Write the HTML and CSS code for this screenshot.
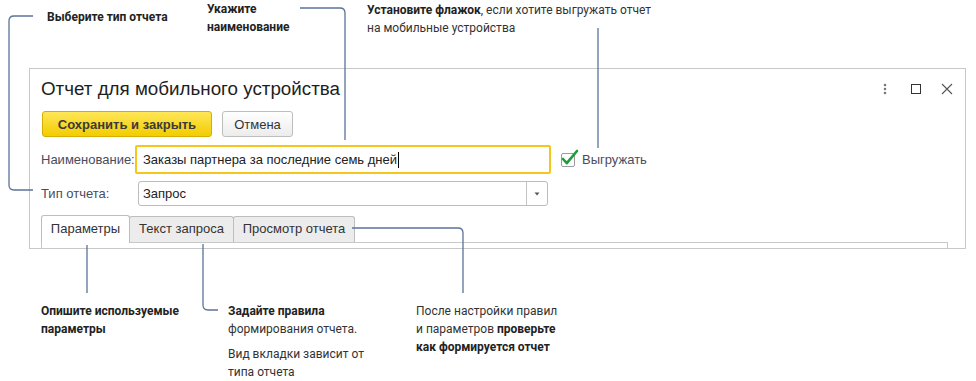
FILE: index.html
```html
<!DOCTYPE html>
<html lang="ru">
  <head>
    <meta charset="UTF-8" />
    <meta name="viewport" content="width=device-width, initial-scale=1.0" />
    <title>Отчет для мобильного устройства</title>
    <link rel="stylesheet" href="styles.css">
  </head>
  <body>
    <div class="page">
      <div class="notes notes-top">
        <p class="note note-type"><b>Выберите тип отчета</b></p>
        <p class="note note-name"><b>Укажите<br />наименование</b></p>
        <p class="note note-flag"><b>Установите флажок</b>, если хотите выгружать отчет<br />на мобильные устройства</p>
      </div>

      <div class="window">
        <div class="win-head">
          <h1 class="win-title">Отчет для мобильного устройства</h1>
          <div class="win-icons">
            <svg class="win-icon" viewBox="0 0 20 20">
              <circle cx="10" cy="6" r="1.3" fill="#7a7a7a" />
              <circle cx="10" cy="10" r="1.3" fill="#7a7a7a" />
              <circle cx="10" cy="14" r="1.3" fill="#7a7a7a" />
            </svg>
            <svg class="win-icon" viewBox="0 0 20 20">
              <rect x="5.5" y="5.5" width="9" height="9" fill="none" stroke="#333" stroke-width="1" />
            </svg>
            <svg class="win-icon" viewBox="0 0 20 20">
              <path d="M5 5 L15 15 M15 5 L5 15" stroke="#555" stroke-width="1.1" fill="none" />
            </svg>
          </div>
        </div>

        <div class="toolbar">
          <button class="btn btn-default">Сохранить и закрыть</button>
          <button class="btn btn-cancel">Отмена</button>
        </div>

        <div class="form-row row-name">
          <span class="field-label">Наименование:</span>
          <div class="field field-focus">Заказы партнера за последние семь дней<span class="caret"></span></div>
          <label class="check">
            <span class="check-box">
              <svg class="check-mark" viewBox="0 0 20 20">
                <path d="M3 11 L6.8 15.2 L17 3" stroke="#1f9c3b" stroke-width="2.6" fill="none" stroke-linecap="round" stroke-linejoin="round" />
              </svg>
            </span>
            Выгружать
          </label>
        </div>

        <div class="form-row row-type">
          <span class="field-label">Тип отчета:</span>
          <div class="field field-select">
            <span class="select-value">Запрос</span>
            <span class="select-btn">
              <svg viewBox="0 0 20 23" width="20" height="23">
                <path d="M7.5 10.5 L12.5 10.5 L10 13.5 Z" fill="#555" />
              </svg>
            </span>
          </div>
        </div>

        <div class="tabs">
          <div class="tab tab-active">Параметры</div>
          <div class="tab tab-query">Текст запроса</div>
          <div class="tab tab-preview">Просмотр отчета</div>
        </div>
        <div class="tab-panel"></div>
      </div>

      <div class="notes notes-bottom">
        <p class="note note-params"><b>Опишите используемые<br />параметры</b></p>
        <div class="note note-rules">
          <p><b>Задайте правила</b><br />формирования отчета.</p>
          <p class="note-extra">Вид вкладки зависит от<br />типа отчета</p>
        </div>
        <p class="note note-check">После настройки правил<br />и параметров <b>проверьте<br />как формируется отчет</b></p>
      </div>

      <!-- линии выносок -->
      <svg class="callouts" viewBox="0 0 976 381" width="976" height="381">
        <path d="M33 16 H14 Q9 16 9 21 V185 Q9 190 14 190 H33" />
        <path d="M300 8 H340 Q345 8 345 13 V140" />
        <path d="M598 28 V148" />
        <path d="M87 245 V293" />
        <path d="M203 244 V305 Q203 310 208 310 H218" />
        <path d="M352 228 H458 Q463 228 463 233 V293" />
      </svg>
    </div>
  </body>
</html>
```

FILE: styles.css
```css
* {
  margin: 0;
  padding: 0;
  box-sizing: border-box;
}
body {
  background: #fff;
  font-family: "Liberation Sans", Arial, sans-serif;
  color: #333;
}
.page {
  position: relative;
  width: 976px;
  height: 381px;
  overflow: hidden;
}

/* подписи */
.notes {
  display: flex;
  align-items: flex-start;
  font-family: Roboto, "Noto Sans", sans-serif;
  font-size: 12px;
  line-height: 18px;
  color: #333;
}
.note b {
  font-weight: 700;
  color: #222;
}
.notes-top {
  height: 68px;
}
.note-type {
  margin-left: 47px;
  width: 160px;
  padding-top: 8px;
}
.note-name {
  width: 160px;
}
.note-flag {
  padding-top: 1px;
}
.notes-bottom {
  margin-top: 53px;
}
.note-params {
  margin-left: 41px;
  width: 187px;
}
.note-rules {
  width: 188px;
}
.note-extra {
  margin-top: 7px;
}

/* окно */
.window {
  margin-left: 29px;
  width: 937px;
  height: 181px;
  border: 1px solid #c8c8c8;
  padding: 9px 8px 0 11px;
  overflow: hidden;
}
.win-head {
  display: flex;
  align-items: center;
  height: 22px;
}
.win-title {
  flex: 1;
  font-size: 18.8px;
  font-weight: normal;
  line-height: 22px;
  color: #1e1e1e;
}
.win-icons {
  display: flex;
  gap: 11px;
}
.win-icon {
  width: 20px;
  height: 20px;
}

.toolbar {
  display: flex;
  gap: 10px;
  margin-top: 11px;
}
.btn {
  height: 26px;
  border: 1px solid #bdbdbd;
  border-radius: 3px;
  background: linear-gradient(#ffffff, #ececec);
  font-family: "Liberation Sans", Arial, sans-serif;
  font-size: 13px;
  color: #333;
}
.btn-default {
  width: 170px;
  margin-left: 1px;
  background: linear-gradient(#ffe658, #f3cc00);
  border-color: #d4af00;
  font-weight: bold;
  color: #3a3a3a;
}
.btn-cancel {
  width: 71px;
}

.form-row {
  display: grid;
  align-items: center;
  font-size: 13px;
}
.row-name {
  grid-template-columns: 94px 416px auto;
  height: 29px;
  margin-top: 8px;
}
.row-type {
  grid-template-columns: 97px 410px;
  height: 25px;
  margin-top: 7px;
}
.field-label {
  color: #4b4b5c;
}
.field {
  display: flex;
  align-items: center;
  height: 25px;
  border: 1px solid #bcbcbc;
  border-radius: 3px;
  background: #fff;
  color: #222;
}
.field-focus {
  height: 29px;
  border: 2px solid #f5c61c;
  border-radius: 2px;
  padding-left: 6px;
}
.caret {
  display: inline-block;
  width: 1px;
  height: 16px;
  margin-left: 1px;
  background: #000;
}
.field-select {
  justify-content: space-between;
  padding-left: 4px;
}
.select-btn {
  display: flex;
  height: 23px;
  border-left: 1px solid #c4c4c4;
}

.check {
  display: flex;
  align-items: center;
  margin-left: 10px;
  color: #4b4b5c;
  font-size: 13px;
}
.check-box {
  position: relative;
  width: 14px;
  height: 14px;
  margin-right: 7px;
  border: 1px solid #9c9c9c;
  border-radius: 2px;
  background: #fff;
}
.check-mark {
  position: absolute;
  left: -2px;
  top: -6px;
  width: 20px;
  height: 20px;
}

/* вкладки */
.tabs {
  display: flex;
  align-items: flex-end;
  margin-top: 9px;
  font-size: 13px;
}
.tab {
  height: 26px;
  margin-left: -1px;
  border: 1px solid #bdbdbd;
  border-bottom: 0;
  border-radius: 3px 3px 0 0;
  background: #ececec;
  line-height: 24px;
  text-align: center;
  color: #333;
}
.tab-active {
  position: relative;
  z-index: 1;
  width: 89px;
  height: 28px;
  margin-left: 0;
  margin-bottom: -1px;
  background: #fff;
  line-height: 26px;
}
.tab-query {
  width: 105px;
}
.tab-preview {
  width: 122px;
}
.tab-panel {
  width: 907px;
  height: 40px;
  border: 1px solid #c8c8c8;
}

.callouts {
  position: absolute;
  left: 0;
  top: 0;
  pointer-events: none;
}
.callouts path {
  fill: none;
  stroke: #5b7399;
  stroke-width: 1.3;
}
```
